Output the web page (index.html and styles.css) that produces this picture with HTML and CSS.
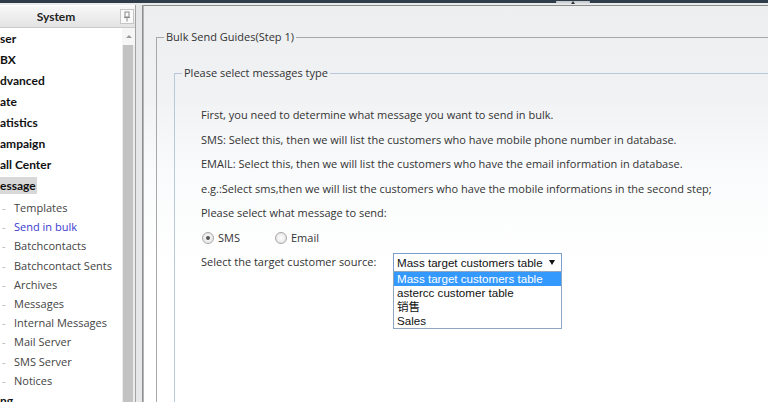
FILE: index.html
```html
<!DOCTYPE html>
<html>
<head>
  <title>Bulk Send</title>
  <link rel="stylesheet" href="styles.css">
</head>
<body>
  <div class="topbar"><span class="handle"></span></div>
  <div class="frame">
    <div class="sidebar">
      <div class="side-head">
        <span class="side-title">System</span>
        <span class="pin">
          <svg width="10" height="11" viewBox="0 0 10 11">
            <rect x="3" y="1" width="4" height="5" fill="none" stroke="#8a8a8a"/>
            <line x1="2" y1="6.5" x2="8" y2="6.5" stroke="#8a8a8a"/>
            <line x1="5" y1="7" x2="5" y2="10.5" stroke="#8a8a8a"/>
          </svg>
        </span>
      </div>
      <div class="side-body">
        <ul class="menu">
          <li class="top">ser</li>
          <li class="top">BX</li>
          <li class="top">dvanced</li>
          <li class="top">ate</li>
          <li class="top">atistics</li>
          <li class="top">ampaign</li>
          <li class="top">all Center</li>
          <li class="top"><span class="current">essage</span></li>
          <li class="sub first">Templates</li>
          <li class="sub active">Send in bulk</li>
          <li class="sub">Batchcontacts</li>
          <li class="sub">Batchcontact Sents</li>
          <li class="sub">Archives</li>
          <li class="sub">Messages</li>
          <li class="sub">Internal Messages</li>
          <li class="sub">Mail Server</li>
          <li class="sub">SMS Server</li>
          <li class="sub">Notices</li>
          <li class="top">ng</li>
        </ul>
        <div class="scrollbar">
          <div class="scroll-up"><span class="arrow-up"></span></div>
          <div class="thumb"></div>
        </div>
      </div>
    </div>
    <div class="splitter"></div>

    <div class="main">
      <fieldset class="guide">
        <legend>Bulk Send Guides(Step 1)</legend>
        <fieldset class="type">
          <legend>Please select messages type</legend>
          <div class="type-body">
            <div class="line">First, you need to determine what message you want to send in bulk.</div>
            <div class="line">SMS: Select this, then we will list the customers who have mobile phone number in database.</div>
            <div class="line">EMAIL: Select this, then we will list the customers who have the email information in database.</div>
            <div class="line">e.g.:Select sms,then we will list the customers who have the mobile informations in the second step;</div>
            <div class="line">Please select what message to send:</div>
            <div class="line radios">
              <span class="radio checked"></span><span class="radio-label">SMS</span>
              <span class="radio"></span><span class="radio-label">Email</span>
            </div>
            <div class="line source">
              <span class="source-label">Select the target customer source:</span>
              <div class="select">
                Mass target customers table
                <span class="caret"></span>
                <ul class="options">
                  <li class="selected">Mass target customers table</li>
                  <li>astercc customer table</li>
                  <li>销售</li>
                  <li>Sales</li>
                </ul>
              </div>
            </div>
          </div>
        </fieldset>
      </fieldset>
    </div>
  </div>
</body>
</html>
```

FILE: styles.css
```css
body {
  margin: 0;
  width: 768px;
  height: 402px;
  overflow: hidden;
  font-family: "Open Sans", sans-serif;
  background: #e8eaec;
}
.topbar {
  height: 3px;
  background: #2f3c49;
  position: relative;
}
.handle {
  position: absolute;
  left: 556px;
  top: 1px;
  width: 34px;
  height: 4px;
  background: linear-gradient(#bfc3c7, #eef0f2);
  border-radius: 0 0 8px 8px;
}
.handle:after {
  content: "";
  position: absolute;
  left: 15px;
  top: 0;
  border-left: 2px solid transparent;
  border-right: 2px solid transparent;
  border-bottom: 3px solid #333;
}
.frame {
  display: flex;
  height: 399px;
  padding-top: 2px;
  box-sizing: border-box;
}

/* sidebar */
.sidebar {
  width: 135px;
  display: flex;
  flex-direction: column;
  background: #fff;
  padding-top: 1px;
  box-sizing: border-box;
}
.side-head {
  height: 21px;
  border-bottom: 1px solid #cacaca;
  background: linear-gradient(#f8f8f8, #e3e3e3);
  display: flex;
  align-items: center;
}
.side-title {
  flex: 1;
  text-align: center;
  font-family: Lato, sans-serif;
  font-weight: bold;
  font-size: 12px;
  color: #222;
  padding-right: 8px;
}
.pin {
  width: 12px;
  height: 13px;
  border: 1px solid #c6c6c6;
  background: #fafafa;
  margin-right: 1px;
  display: flex;
  align-items: center;
  justify-content: center;
}
.side-body {
  flex: 1;
  display: flex;
  overflow: hidden;
}
.menu {
  flex: 1;
  list-style: none;
  margin: 0;
  padding: 0;
  font-size: 11px;
  white-space: nowrap;
  overflow: hidden;
}
.menu .top {
  height: 21px;
  line-height: 21px;
  font-family: Lato, sans-serif;
  font-size: 12px;
  font-weight: bold;
  color: #111;
}
.current {
  background: #d8d8d8;
  padding: 1px 1px 1px 0;
}
.menu .sub {
  height: 19.2px;
  line-height: 19.2px;
  color: #444;
  padding-left: 14px;
  position: relative;
}
.menu .sub:before {
  content: "-";
  position: absolute;
  left: 2px;
  color: #b5b5b5;
}
.menu .first {
  margin-top: 2px;
}
.menu .active {
  color: #3a3ad0;
}
.scrollbar {
  width: 13px;
  background: #ececec;
  display: flex;
  flex-direction: column;
}
.scroll-up {
  height: 17px;
  background: #f6f6f6;
  display: flex;
  align-items: center;
  justify-content: center;
}
.arrow-up {
  border-left: 3px solid transparent;
  border-right: 3px solid transparent;
  border-bottom: 3px solid #9a9a9a;
}
.thumb {
  flex: 1;
  background: #c3c3c3;
  margin: 0 2px 0 1px;
}
.splitter {
  width: 6px;
  border-left: 1px solid #a2a2a2;
  border-right: 1px solid #909090;
  background: #e6e7e8;
}

/* main */
.main {
  flex: 1;
  border-top: 1px solid #8c8c8c;
  border-left: 1px solid #b4b4b4;
  background: linear-gradient(#eceef0, #f1f2f4 90px, #fafbfc 170px, #fff 260px);
  overflow: hidden;
  padding: 23px 0 0 12px;
}
fieldset {
  margin: 0;
  min-width: 0;
}
legend {
  padding: 0 2px;
  font-size: 11px;
  line-height: 16px;
  color: #333;
}
.guide {
  width: 680px;
  height: 420px;
  border: 1px solid #a8a8a8;
  padding: 0 0 0 7px;
  box-sizing: border-box;
}
.type {
  margin: 20px 0 0 10px;
  height: 400px;
  border: 1px solid #b8c9dc;
  padding: 22px 0 0 7px;
}
.type-body {
  padding-left: 19px;
  font-size: 11px;
  color: #333;
}
.line {
  height: 24.5px;
  line-height: 24.5px;
  white-space: nowrap;
}
.radios {
  display: flex;
  align-items: center;
}
.radio {
  width: 10px;
  height: 10px;
  border-radius: 50%;
  border: 1px solid #a8a8a8;
  background: radial-gradient(#fff, #dedede);
  margin: 0 4px 0 1px;
  position: relative;
}
.radio.checked:after {
  content: "";
  position: absolute;
  left: 3px;
  top: 3px;
  width: 4px;
  height: 4px;
  border-radius: 50%;
  background: #555;
}
.radio-label {
  margin-right: 34px;
}
.source {
  display: flex;
  align-items: center;
}
.source-label {
  width: 192px;
}
.select {
  position: relative;
  width: 169px;
  height: 19px;
  box-sizing: border-box;
  border: 1px solid #7d9fd0;
  background: #fff;
  font-family: "Liberation Sans", sans-serif;
  font-size: 11.6px;
  line-height: 17px;
  padding-left: 3px;
  color: #111;
}
.caret {
  position: absolute;
  right: 6px;
  top: 6px;
  border-left: 3px solid transparent;
  border-right: 3px solid transparent;
  border-top: 5px solid #111;
}
.options {
  position: absolute;
  left: -1px;
  top: 17px;
  width: 169px;
  box-sizing: border-box;
  margin: 0;
  padding: 0;
  list-style: none;
  border: 1px solid #8fa6c2;
  background: #fff;
  font-family: "Liberation Sans", "Noto Sans CJK SC", sans-serif;
  line-height: 14px;
}
.options li {
  padding-left: 3px;
  height: 14px;
}
.options .selected {
  background: #3399ff;
  color: #fff;
}
```
